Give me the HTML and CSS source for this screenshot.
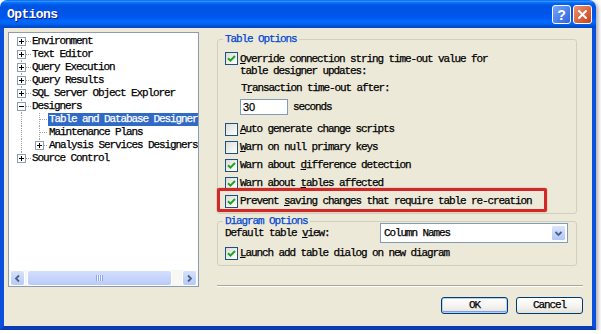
FILE: index.html
```html
<!DOCTYPE html>
<html lang="en">
<head>
	<meta charset="UTF-8">
	<title>Options</title>
	<link rel="stylesheet" href="styles.css">
</head>
<body>

	<div class="window">

		<!-- Title bar -->
		<div class="titlebar">
			<span class="title">Options</span>
			<div class="caption-buttons">
				<span class="cap-btn help">?</span>
				<span class="cap-btn close">
					<svg width="11" height="11" viewBox="0 0 11 11"><path d="M2 2L9 9M9 2L2 9" stroke="#fff" stroke-width="2" stroke-linecap="round"/></svg>
				</span>
			</div>
		</div>

		<div class="frame">

			<!-- Tree -->
			<div class="tree">
				<div class="tree-items">
					<div class="node">
						<svg class="cell" width="18" height="13"><path class="ln" d="M8.5 6V13M13 6.5H18"/><rect class="bx" x="4.5" y="2.5" width="8" height="8"/><path class="sg" d="M6 6.5h5M8.5 4v5"/></svg>
						<span class="label">Environment</span>
					</div>
					<div class="node">
						<svg class="cell" width="18" height="13"><path class="ln" d="M8.5 0V13M13 6.5H18"/><rect class="bx" x="4.5" y="2.5" width="8" height="8"/><path class="sg" d="M6 6.5h5M8.5 4v5"/></svg>
						<span class="label">Text Editor</span>
					</div>
					<div class="node">
						<svg class="cell" width="18" height="13"><path class="ln" d="M8.5 0V13M13 6.5H18"/><rect class="bx" x="4.5" y="2.5" width="8" height="8"/><path class="sg" d="M6 6.5h5M8.5 4v5"/></svg>
						<span class="label">Query Execution</span>
					</div>
					<div class="node">
						<svg class="cell" width="18" height="13"><path class="ln" d="M8.5 0V13M13 6.5H18"/><rect class="bx" x="4.5" y="2.5" width="8" height="8"/><path class="sg" d="M6 6.5h5M8.5 4v5"/></svg>
						<span class="label">Query Results</span>
					</div>
					<div class="node">
						<svg class="cell" width="18" height="13"><path class="ln" d="M8.5 0V13M13 6.5H18"/><rect class="bx" x="4.5" y="2.5" width="8" height="8"/><path class="sg" d="M6 6.5h5M8.5 4v5"/></svg>
						<span class="label">SQL Server Object Explorer</span>
					</div>
					<div class="node">
						<svg class="cell" width="18" height="13"><path class="ln" d="M8.5 0V13M13 6.5H18"/><rect class="bx" x="4.5" y="2.5" width="8" height="8"/><path class="sg" d="M6 6.5h5"/></svg>
						<span class="label">Designers</span>
					</div>
					<div class="node">
						<svg class="cell" width="18" height="13"><path class="ln" d="M8.5 0V13"/></svg>
						<svg class="cell" width="17" height="13"><path class="ln" d="M8.5 0V13M9 6.5H17"/></svg>
						<span class="label selected">Table and Database Designer</span>
					</div>
					<div class="node">
						<svg class="cell" width="18" height="13"><path class="ln" d="M8.5 0V13"/></svg>
						<svg class="cell" width="17" height="13"><path class="ln" d="M8.5 0V13M9 6.5H17"/></svg>
						<span class="label">Maintenance Plans</span>
					</div>
					<div class="node">
						<svg class="cell" width="18" height="13"><path class="ln" d="M8.5 0V13"/></svg>
						<svg class="cell" width="17" height="13"><path class="ln" d="M8.5 0V6M13 6.5H17"/><rect class="bx" x="4.5" y="2.5" width="8" height="8"/><path class="sg" d="M6 6.5h5M8.5 4v5"/></svg>
						<span class="label">Analysis Services Designers</span>
					</div>
					<div class="node">
						<svg class="cell" width="18" height="13"><path class="ln" d="M8.5 0V6M13 6.5H18"/><rect class="bx" x="4.5" y="2.5" width="8" height="8"/><path class="sg" d="M6 6.5h5M8.5 4v5"/></svg>
						<span class="label">Source Control</span>
					</div>
				</div>

				<!-- Horizontal scrollbar -->
				<div class="hscroll">
					<span class="sbtn">
						<svg width="9" height="9" viewBox="0 0 9 9"><path d="M6 1.5L3 4.5L6 7.5" fill="none" stroke="#4d6185" stroke-width="1.8"/></svg>
					</span>
					<span class="thumb"><span class="grip"></span></span>
					<span class="sbtn right">
						<svg width="9" height="9" viewBox="0 0 9 9"><path d="M3 1.5L6 4.5L3 7.5" fill="none" stroke="#4d6185" stroke-width="1.8"/></svg>
					</span>
				</div>
			</div>

			<!-- Options pane -->
			<div class="pane">

				<fieldset class="group">
					<legend>Table Options</legend>

					<div class="multi">
						<span class="check on"><svg width="11" height="11" viewBox="0 0 11 11"><path d="M2 5.2l2.4 2.4L9 3" fill="none" stroke="#21a121" stroke-width="2"/></svg></span>
						<span class="text"><u>O</u>verride connection string time-out value for<br>table designer updates:</span>
					</div>

					<div class="indent-label">T<u>r</u>ansaction time-out after:</div>
					<div class="timeout-row">
						<input class="field" type="text" value="30">
						<span class="unit">seconds</span>
					</div>

					<div class="check-row first">
						<span class="check"></span>
						<span><u>A</u>uto generate change scripts</span>
					</div>
					<div class="check-row">
						<span class="check"></span>
						<span><u>W</u>arn on null primary keys</span>
					</div>
					<div class="check-row">
						<span class="check on"><svg width="11" height="11" viewBox="0 0 11 11"><path d="M2 5.2l2.4 2.4L9 3" fill="none" stroke="#21a121" stroke-width="2"/></svg></span>
						<span>Warn about <u>d</u>ifference detection</span>
					</div>
					<div class="check-row">
						<span class="check on"><svg width="11" height="11" viewBox="0 0 11 11"><path d="M2 5.2l2.4 2.4L9 3" fill="none" stroke="#21a121" stroke-width="2"/></svg></span>
						<span>Warn about <u>t</u>ables affected</span>
					</div>
					<div class="check-row flagged">
						<span class="check on"><svg width="11" height="11" viewBox="0 0 11 11"><path d="M2 5.2l2.4 2.4L9 3" fill="none" stroke="#21a121" stroke-width="2"/></svg></span>
						<span>Prevent <u>s</u>aving changes that require table re-creation</span>
					</div>
				</fieldset>

				<fieldset class="group diagram">
					<legend>Diagram Options</legend>

					<div class="view-row">
						<span>Default table <u>v</u>iew:</span>
						<div class="combo">
							<span class="combo-text">Column Names</span>
							<span class="drop">
								<svg width="9" height="9" viewBox="0 0 9 9"><path d="M1.5 3L4.5 6L7.5 3" fill="none" stroke="#4d6185" stroke-width="1.8"/></svg>
							</span>
						</div>
					</div>
					<div class="check-row launch">
						<span class="check on"><svg width="11" height="11" viewBox="0 0 11 11"><path d="M2 5.2l2.4 2.4L9 3" fill="none" stroke="#21a121" stroke-width="2"/></svg></span>
						<span><u>L</u>aunch add table dialog on new diagram</span>
					</div>
				</fieldset>

				<div class="sep"></div>

				<div class="actions">
					<button type="button" class="btn default">OK</button>
					<button type="button" class="btn">Cancel</button>
				</div>
			</div>

		</div>
	</div>

</body>
</html>
```

FILE: styles.css
```css
body {
	margin: 0;
	background-color: #fff;
	font: 11px/13px "Liberation Mono", monospace;
	letter-spacing: -1.1px;
	color: #000;
	-webkit-text-stroke: 0.25px currentColor;
}
.window {
	width: 596px;
	height: 330px;
	display: flex;
	flex-direction: column;
	border-radius: 7px 7px 0 0;
	box-shadow: 2px 2px 4px rgba(0,0,0,0.35);
}

/* Title bar */
.titlebar {
	height: 28px;
	flex: none;
	box-sizing: border-box;
	padding: 1px 4px 0 7px;
	display: flex;
	align-items: center;
	justify-content: space-between;
	border-radius: 7px 7px 0 0;
	background: linear-gradient(#0058ee 0%, #3593ff 4%, #288eff 6%, #127dff 8%, #036ffc 10%, #0262ee 14%, #0057e5 20%, #0054e3 24%, #0055eb 56%, #005bf5 66%, #026afe 76%, #0062ef 86%, #0052d6 92%, #0046c4 100%);
}
.title {
	color: #fff;
	font-weight: bold;
	font-size: 13px;
	letter-spacing: -0.6px;
	text-shadow: 1px 1px 0 #0f1d8c;
	-webkit-text-stroke: 0;
}
.caption-buttons {
	display: flex;
	gap: 2px;
}
.cap-btn {
	width: 19px;
	height: 19px;
	box-sizing: border-box;
	border: 1px solid #fff;
	border-radius: 3px;
	display: flex;
	align-items: center;
	justify-content: center;
}
.help {
	background: linear-gradient(135deg, #78a6fa, #2d63dc);
	color: #fff;
	font: bold 14px/1 "Liberation Sans", sans-serif;
	letter-spacing: 0;
	-webkit-text-stroke: 0;
}
.close {
	background: linear-gradient(135deg, #f09070, #c7421c);
}

/* Window body */
.frame {
	flex: 1;
	display: flex;
	gap: 18px;
	padding: 4px 9px 0 4px;
	background-color: #ece9d8;
	border: 4px solid #0a50dc;
	border-top: 0;
	border-bottom-color: #0a3cb8;
}

/* Tree */
.tree {
	width: 191px;
	height: 255px;
	flex: none;
	box-sizing: border-box;
	border: 1px solid #8e9cb0;
	background-color: #fff;
	display: flex;
	flex-direction: column;
}
.tree-items {
	flex: 1;
	padding: 2px 0 0 4px;
	overflow: hidden;
}
.node {
	display: flex;
	height: 13px;
}
.cell {
	flex: none;
}
.cell .ln {
	fill: none;
	stroke: #a3a3a3;
	stroke-dasharray: 1 1;
}
.cell .bx {
	fill: #fff;
	stroke: #8d9db2;
}
.cell .sg {
	stroke: #000;
}
.label {
	padding: 0 1px;
	white-space: nowrap;
}
.label.selected {
	background-color: #316ac5;
	color: #fff;
}

.hscroll {
	height: 16px;
	flex: none;
	display: flex;
	padding: 0 1px;
	background-color: #f7f7f3;
}
.sbtn {
	width: 15px;
	box-sizing: border-box;
	border: 1px solid #fff;
	border-radius: 3px;
	background: linear-gradient(#d6e2fd, #b6caf7);
	display: flex;
	align-items: center;
	justify-content: center;
}
.sbtn.right {
	margin-left: auto;
}
.thumb {
	width: 145px;
	margin-left: 2px;
	box-sizing: border-box;
	border: 1px solid #fff;
	border-radius: 3px;
	background: linear-gradient(#d3defd, #b9cbf8);
	display: flex;
	align-items: center;
	justify-content: center;
}
.grip {
	width: 7px;
	height: 6px;
	background: repeating-linear-gradient(90deg, #8ca6e6 0 1px, #eef3ff 1px 2px);
}

/* Options pane */
.pane {
	width: 366px;
	display: flex;
	flex-direction: column;
}
.group {
	box-sizing: border-box;
	width: 360px;
	min-width: 0;
	margin: 2px 0 0;
	padding: 8px 7px 5px;
	border: 1px solid #d0d0bf;
	border-radius: 3px;
}
.group legend {
	padding: 0 2px;
	margin-left: -2px;
	line-height: 10px;
	color: #0046d5;
}
.group.diagram {
	padding-top: 0;
}
.check {
	width: 13px;
	height: 13px;
	flex: none;
	box-sizing: border-box;
	margin-right: 2px;
	border: 1px solid #1c5180;
	background: linear-gradient(135deg, #dcdcd7, #fff);
	display: flex;
	align-items: center;
	justify-content: center;
}
.multi {
	display: flex;
	align-items: flex-start;
}
.multi .text {
	padding-top: 1px;
	line-height: 12px;
}
.indent-label {
	margin: 5px 0 0 16px;
	line-height: 12px;
}
.timeout-row {
	display: flex;
	align-items: center;
	margin: 5px 0 0 15px;
}
.field {
	width: 48px;
	height: 16px;
	box-sizing: border-box;
	margin: 0;
	padding: 0 2px;
	border: 1px solid #7f9db9;
	background-color: #fff;
	font: 11px "Liberation Sans", sans-serif;
	letter-spacing: 0;
	color: #000;
}
.unit {
	margin-left: 5px;
}
.check-row {
	display: flex;
	align-items: center;
	height: 13px;
	margin-top: 5px;
}
.check-row.first {
	margin-top: 8px;
}
.check-row.launch {
	margin-top: 4px;
}
.flagged {
	position: relative;
}
.flagged::after {
	content: "";
	position: absolute;
	left: -8px;
	right: 22px;
	top: -7px;
	bottom: -4px;
	border: 3px solid #d42828;
	border-radius: 2px;
	box-shadow: 0 0 1px #8a1010;
}
.view-row {
	display: flex;
	align-items: center;
	justify-content: space-between;
	height: 20px;
	margin-top: -3px;
}
.combo {
	width: 188px;
	height: 20px;
	margin-right: 1px;
	box-sizing: border-box;
	border: 1px solid #7f9db9;
	background-color: #fff;
	display: flex;
	align-items: center;
}
.combo-text {
	padding-left: 3px;
}
.drop {
	width: 15px;
	height: 16px;
	margin: 0 1px 0 auto;
	box-sizing: border-box;
	border: 1px solid #fff;
	border-radius: 2px;
	background: linear-gradient(#dbe5fd, #b2c6f5);
	display: flex;
	align-items: center;
	justify-content: center;
}
.sep {
	margin-top: 19px;
	border-top: 1px solid #aca899;
	border-bottom: 1px solid #fff;
}
.actions {
	display: flex;
	justify-content: flex-end;
	gap: 8px;
	margin-top: 10px;
}
.btn {
	width: 67px;
	height: 17px;
	padding: 0;
	border: 1px solid #003c74;
	border-radius: 3px;
	background: linear-gradient(#fff, #f3f2ee 60%, #e4e1d6);
	font: inherit;
	letter-spacing: inherit;
	color: #000;
}
.btn.default {
	box-shadow: inset 0 0 0 1px #b8d0f7, inset 0 -1px 0 1px #7a9ee8;
}
```
